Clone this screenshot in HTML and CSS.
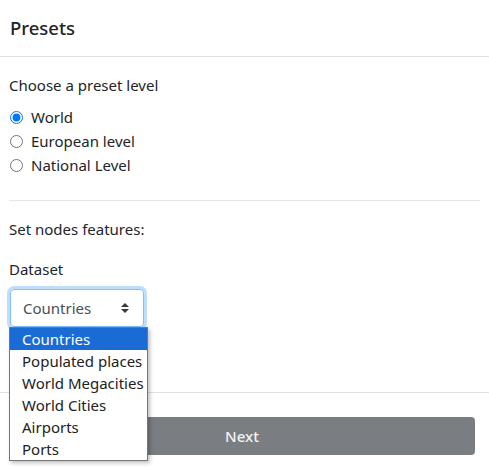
FILE: index.html
```html
<!DOCTYPE html>
<html>
<head>
<meta charset="utf-8">
<link rel="stylesheet" href="styles.css">
</head>
<body>
<div class="modal">
  <div class="modal-header"><h5 class="title">Presets</h5></div>
  <div class="modal-body">
    <p class="label">Choose a preset level</p>
    <div class="radios">
      <label class="radio"><input type="radio" name="lvl" checked> World</label>
      <label class="radio"><input type="radio" name="lvl"> European level</label>
      <label class="radio"><input type="radio" name="lvl"> National Level</label>
    </div>
    <hr class="sep">
    <p class="section">Set nodes features:</p>
    <p class="label">Dataset</p>
    <div class="select-wrap">
      <div class="select">
        <span>Countries</span>
        <svg class="caret" width="8" height="10" viewBox="0 0 8 10"><path d="M4 0 L8 4 H0 Z M4 10 L0 6 H8 Z" fill="#343a40"/></svg>
      </div>
      <ul class="dropdown">
        <li class="active">Countries</li>
        <li>Populated places</li>
        <li>World Megacities</li>
        <li>World Cities</li>
        <li>Airports</li>
        <li>Ports</li>
      </ul>
    </div>
  </div>
  <div class="modal-footer">
    <button class="btn">Next</button>
  </div>
</div>
</body>
</html>
```
FILE: styles.css
```css
* { box-sizing: border-box; }
body {
  margin: 0;
  background: #fff;
  font-family: "Noto Sans", "Open Sans", sans-serif;
  font-size: 15px;
  color: #212529;
  line-height: 24px;
}
.modal { width: 489px; }
.modal-header {
  padding: 16px 10px;
  border-bottom: 1px solid #dee2e6;
}
.title {
  margin: 0;
  font-size: 18.5px;
  font-weight: 500;
  line-height: 24px;
}
.modal-body {
  padding: 16px 9px 65px;
}
.label { margin: 0 0 8px; }
.radios { display: flex; flex-direction: column; }
.radio { display: flex; align-items: center; height: 24px; }
.radio input {
  margin: 0 8px 0 1px;
  width: 13px; height: 13px;
  accent-color: #0075ff;
}
.sep {
  border: 0;
  border-top: 1px solid #e4e6e8;
  margin: 23px 0 16px;
}
.section { margin: 0 0 16px; }
.select-wrap { position: relative; }
.select {
  width: 134px;
  height: 38px;
  margin-left: 1px;
  border: 1px solid #80bdff;
  border-radius: 4px;
  box-shadow: 0 0 0 3px rgba(0,123,255,.25);
  display: flex;
  align-items: center;
  justify-content: space-between;
  padding: 0 14px 0 12px;
  color: #495057;
}
.caret { display: block; }
.dropdown {
  position: absolute;
  left: 0; top: 38px;
  width: 139px;
  margin: 0; padding: 0;
  list-style: none;
  background: #fff;
  border: 1px solid #767676;
  box-shadow: 2px 2px 4px rgba(0,0,0,.25);
  z-index: 2;
}
.dropdown li {
  height: 22px;
  line-height: 22px;
  padding-left: 12px;
  white-space: nowrap;
  color: #222;
}
.dropdown li.active { background: #1a6bd6; color: #fff; }
.modal-footer {
  border-top: 1px solid #dee2e6;
  padding: 24px 14px 12px 9px;
}
.btn {
  display: block;
  width: 100%;
  height: 38px;
  border: 0;
  border-radius: 4px;
  background: #7a7d81;
  color: #f2f2f2;
  font-family: inherit;
  font-size: 15px;
  font-weight: 500;
}
```
